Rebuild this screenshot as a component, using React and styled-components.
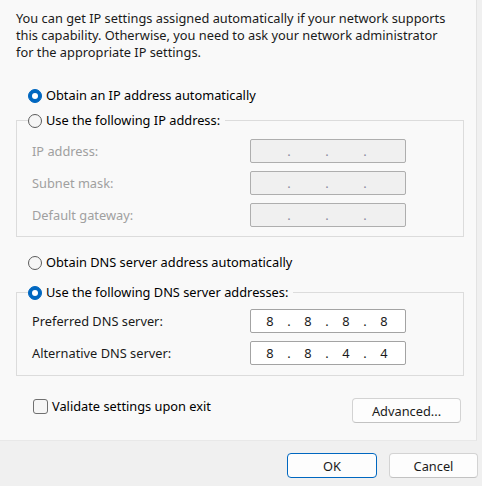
import React from "react";
import styled, { createGlobalStyle } from "styled-components";

const GlobalStyle = createGlobalStyle`
  html, body {
    margin: 0;
    padding: 0;
    background: #f0f0f0;
  }
  * {
    box-sizing: border-box;
  }
`;

const App = () => {
  return (
    <Dialog>
      <GlobalStyle />
      <Panel>
        <Intro>
          You can get IP settings assigned automatically if your network supports
          <br />
          this capability. Otherwise, you need to ask your network administrator
          <br />
          for the appropriate IP settings.
        </Intro>

        <Option $top={26}>
          <Radio $checked />
          Obtain an IP address automatically
        </Option>

        <Group $top={8}>
          <Legend>
            <Option>
              <Radio />
              Use the following IP address:
            </Option>
          </Legend>
          <Fields $padTop={10} $padBottom={9}>
            <FieldLabel $disabled>IP address:</FieldLabel>
            <IpBox $disabled>
              <IpValue />
            </IpBox>
            <FieldLabel $disabled>Subnet mask:</FieldLabel>
            <IpBox $disabled>
              <IpValue />
            </IpBox>
            <FieldLabel $disabled>Default gateway:</FieldLabel>
            <IpBox $disabled>
              <IpValue />
            </IpBox>
          </Fields>
        </Group>

        <Option $top={17}>
          <Radio />
          Obtain DNS server address automatically
        </Option>

        <Group $top={13}>
          <Legend>
            <Option>
              <Radio $checked />
              Use the following DNS server addresses:
            </Option>
          </Legend>
          <Fields $padTop={8} $padBottom={10}>
            <FieldLabel>Preferred DNS server:</FieldLabel>
            <IpBox>
              <IpValue parts={["8", "8", "8", "8"]} />
            </IpBox>
            <FieldLabel>Alternative DNS server:</FieldLabel>
            <IpBox>
              <IpValue parts={["8", "8", "4", "4"]} />
            </IpBox>
          </Fields>
        </Group>

        <BottomRow>
          <CheckLabel>
            <Checkbox />
            Validate settings upon exit
          </CheckLabel>
          <Button $width={109}>Advanced...</Button>
        </BottomRow>
      </Panel>

      <Footer>
        <Button $width={90} $primary>
          OK
        </Button>
        <Button $width={89}>Cancel</Button>
      </Footer>
    </Dialog>
  );
};

const IpValue = ({ parts = ["", "", "", ""] }) => (
  <>
    {parts.map((p, i) => (
      <React.Fragment key={i}>
        <IpPart>{p}</IpPart>
        {i < 3 && <IpDot>.</IpDot>}
      </React.Fragment>
    ))}
  </>
);

const Dialog = styled.div`
  width: 482px;
  height: 486px;
  display: flex;
  flex-direction: column;
  background: #f0f0f0;
  font-family: "Segoe UI", "Noto Sans", sans-serif;
  font-size: 12.8px;
  color: #000;
`;

const Panel = styled.div`
  width: 477px;
  height: 441px;
  display: flex;
  flex-direction: column;
  align-items: flex-start;
  padding: 10px 0 0 16px;
  background: #f9f9f9;
  border-right: 1px solid #e3e3e3;
  border-bottom: 1px solid #e8e8e8;
`;

const Intro = styled.p`
  margin: 0;
  line-height: 17px;
  white-space: nowrap;
  color: #1a1a1a;
`;

const Option = styled.label`
  display: flex;
  align-items: center;
  gap: 4px;
  height: 17px;
  margin-top: ${(p) => p.$top || 0}px;
  margin-left: ${(p) => (p.$top ? 12 : 0)}px;
  white-space: nowrap;
  line-height: 17px;
`;

const Radio = styled.span`
  width: 14px;
  height: 14px;
  border-radius: 50%;
  flex-shrink: 0;
  background: ${(p) => (p.$checked ? "#0067c0" : "#f6f6f6")};
  border: 1px solid ${(p) => (p.$checked ? "#0067c0" : "#5c5c5c")};
  display: flex;
  align-items: center;
  justify-content: center;

  &::after {
    content: "";
    display: ${(p) => (p.$checked ? "block" : "none")};
    width: 6px;
    height: 6px;
    border-radius: 50%;
    background: #fff;
  }
`;

const Group = styled.fieldset`
  width: 448px;
  margin: ${(p) => p.$top}px 0 0 0;
  padding: 0;
  border: 1px solid #dcdcdc;
  min-inline-size: 0;
`;

const Legend = styled.legend`
  margin-left: 11px;
  padding: 0 5px 0 0;
`;

const Fields = styled.div`
  display: grid;
  grid-template-columns: 218px 156px;
  row-gap: 8px;
  align-items: center;
  padding: ${(p) => p.$padTop}px 0 ${(p) => p.$padBottom}px 15px;
`;

const FieldLabel = styled.span`
  color: ${(p) => (p.$disabled ? "#a0a0a0" : "#1a1a1a")};
  white-space: nowrap;
`;

const IpBox = styled.div`
  height: 24px;
  display: flex;
  align-items: center;
  padding-left: 4px;
  background: ${(p) => (p.$disabled ? "#f0f0f0" : "#ffffff")};
  border: 1px solid ${(p) => (p.$disabled ? "#aeaeae" : "#a3a3a3")};
  border-radius: 2px;
  color: ${(p) => (p.$disabled ? "#8a8aa0" : "#1a1a1a")};
`;

const IpPart = styled.span`
  width: 30px;
  text-align: center;
`;

const IpDot = styled.span`
  width: 8px;
  text-align: center;
`;

const BottomRow = styled.div`
  width: 445px;
  margin-top: 22px;
  display: flex;
  justify-content: space-between;
  align-items: flex-start;
`;

const CheckLabel = styled.label`
  display: flex;
  align-items: center;
  gap: 4px;
  margin-left: 17px;
  height: 16px;
  white-space: nowrap;
`;

const Checkbox = styled.span`
  width: 15px;
  height: 15px;
  border: 1px solid #707070;
  border-radius: 3px;
  background: #f6f6f6;
`;

const Footer = styled.div`
  display: flex;
  justify-content: flex-end;
  gap: 12px;
  padding: 12px 4px 0 0;
`;

const Button = styled.button`
  width: ${(p) => p.$width}px;
  height: 25px;
  font: inherit;
  color: #1a1a1a;
  background: #fdfdfd;
  border: 1px solid ${(p) => (p.$primary ? "#0067c0" : "#d3d3d3")};
  border-bottom-color: ${(p) => (p.$primary ? "#0067c0" : "#c2c2c2")};
  border-radius: 4px;
  padding: 0;
`;

export default App;
